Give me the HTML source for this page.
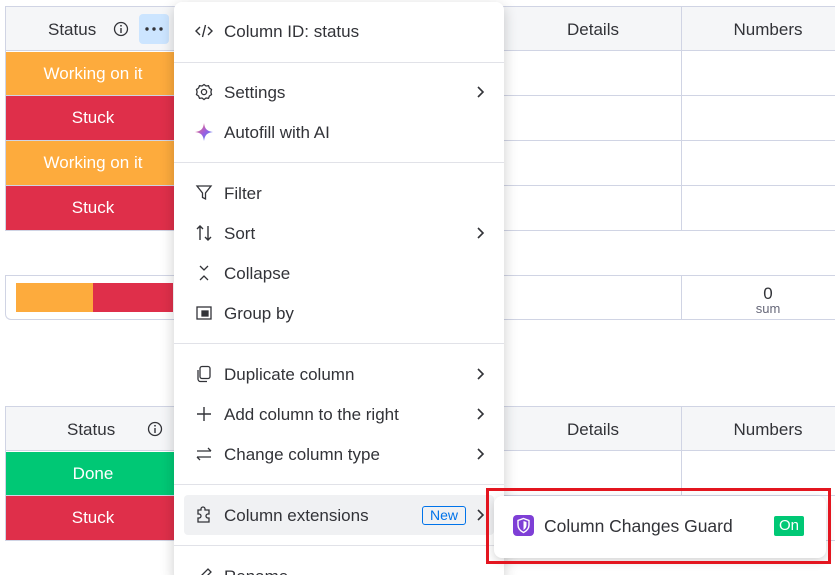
<!DOCTYPE html>
<html><head><style>
html,body{margin:0;width:835px;height:575px;overflow:hidden}
body{background:#fff;font-family:"Liberation Sans",sans-serif;color:#323338;position:relative}
.a{position:absolute}
.hl{position:absolute;height:1px;background:#d0d4e4}
.vl{position:absolute;width:1px;background:#d0d4e4}
.cell{position:absolute;color:#fff;font-size:17px;text-align:center;line-height:44px}
.h{position:absolute;font-size:17px;text-align:center}
.menu{position:absolute;left:174px;top:2px;width:330px;height:580px;background:#fff;border-radius:8px;box-shadow:0 4px 14px rgba(0,0,0,.2)}
.it{position:absolute;left:50px;font-size:17px;line-height:20px}
.ic{position:absolute;left:20px;width:20px;height:20px}
.sep{position:absolute;left:0;width:330px;height:1px;background:#e1e2e8}
.chev{position:absolute;left:300px;width:12px;height:14px}
</style></head><body>
<div class="a" style="left:6px;top:6px;width:829px;height:44px;background:#f5f6f8"></div>
<div class="hl" style="left:6px;top:6px;width:829px"></div>
<div class="hl" style="left:6px;top:50px;width:829px"></div>
<div class="hl" style="left:6px;top:95px;width:829px"></div>
<div class="hl" style="left:6px;top:140px;width:829px"></div>
<div class="hl" style="left:6px;top:185px;width:829px"></div>
<div class="hl" style="left:6px;top:230px;width:829px"></div>
<div class="vl" style="left:5px;top:6px;height:225px"></div>
<div class="vl" style="left:681px;top:6px;height:225px"></div>
<div class="h" style="left:48px;top:20px">Status</div>
<svg class="a" style="left:113px;top:21px" width="16" height="16"><circle cx="8" cy="8" r="6.5" fill="none" stroke="#323338" stroke-width="1.3"/><rect x="7.3" y="7" width="1.4" height="5" fill="#323338"/><circle cx="8" cy="4.8" r=".9" fill="#323338"/></svg>
<div class="a" style="left:139px;top:14px;width:30px;height:30px;background:#cce5ff;border-radius:4px"></div>
<svg class="a" style="left:144px;top:27px" width="20" height="4"><circle cx="3" cy="2" r="1.7" fill="#323338"/><circle cx="10" cy="2" r="1.7" fill="#323338"/><circle cx="17" cy="2" r="1.7" fill="#323338"/></svg>
<div class="cell" style="left:6px;top:52px;width:174px;height:43px;background:#fdab3d">Working on it</div>
<div class="cell" style="left:6px;top:96px;width:174px;background:#df2f4a">Stuck</div>
<div class="cell" style="left:6px;top:141px;width:174px;background:#fdab3d">Working on it</div>
<div class="cell" style="left:6px;top:186px;width:174px;background:#df2f4a">Stuck</div>
<div class="h" style="left:540px;top:20px;width:106px">Details</div>
<div class="h" style="left:715px;top:20px;width:106px">Numbers</div>
<div class="a" style="left:5px;top:275px;width:840px;height:45px;border:1px solid #d0d4e4;border-right:none;border-radius:0 0 0 6px;box-sizing:border-box"></div>
<div class="vl" style="left:681px;top:275px;height:45px"></div>
<div class="a" style="left:16px;top:283px;width:77px;height:29px;background:#fdab3d"></div>
<div class="a" style="left:93px;top:283px;width:80px;height:29px;background:#df2f4a"></div>
<div class="h" style="left:740px;top:285px;width:56px;line-height:17px">0</div>
<div class="h" style="left:740px;top:301px;width:56px;font-size:13px;color:#676879">sum</div>
<div class="a" style="left:6px;top:406px;width:829px;height:44px;background:#f5f6f8"></div>
<div class="hl" style="left:6px;top:406px;width:829px"></div>
<div class="hl" style="left:6px;top:450px;width:829px"></div>
<div class="hl" style="left:6px;top:495px;width:829px"></div>
<div class="hl" style="left:6px;top:540px;width:829px"></div>
<div class="vl" style="left:5px;top:406px;height:135px"></div>
<div class="vl" style="left:681px;top:406px;height:135px"></div>
<div class="h" style="left:67px;top:420px">Status</div>
<svg class="a" style="left:147px;top:421px" width="16" height="16"><circle cx="8" cy="8" r="6.5" fill="none" stroke="#323338" stroke-width="1.3"/><rect x="7.3" y="7" width="1.4" height="5" fill="#323338"/><circle cx="8" cy="4.8" r=".9" fill="#323338"/></svg>
<div class="cell" style="left:6px;top:452px;width:174px;height:43px;background:#00c875">Done</div>
<div class="cell" style="left:6px;top:496px;width:174px;background:#df2f4a">Stuck</div>
<div class="h" style="left:540px;top:420px;width:106px">Details</div>
<div class="h" style="left:715px;top:420px;width:106px">Numbers</div>

<div class="menu">
<svg class="ic" style="top:19px" viewBox="0 0 20 20" fill="none" stroke="#323338" stroke-width="1.4"><path d="M6 6L2 10l4 4M14 6l4 4-4 4M11.5 4l-3 12"/></svg>
<div class="it" style="top:20px">Column ID: status</div>
<div class="sep" style="top:60px"></div>
<svg class="ic" style="top:80px" viewBox="0 0 20 20" fill="none" stroke="#323338" stroke-width="1.3"><path d="M10 2.5l2 1.5 2.5-.3.9 2.3 2.1 1.4-.6 2.6.6 2.6-2.1 1.4-.9 2.3-2.5-.3-2 1.5-2-1.5-2.5.3-.9-2.3-2.1-1.4.6-2.6-.6-2.6 2.1-1.4.9-2.3 2.5.3z"/><circle cx="10" cy="10" r="2.6"/></svg>
<div class="it" style="top:81px">Settings</div>
<svg class="chev" style="top:83px" viewBox="0 0 12 14" fill="none" stroke="#323338" stroke-width="1.6"><path d="M4 2l5 5-5 5"/></svg>
<svg class="ic" style="top:120px" viewBox="0 0 20 20"><defs><linearGradient id="g" x1="0" y1="0" x2="1" y2="1"><stop offset="0" stop-color="#ff7a59"/><stop offset=".5" stop-color="#a25ddc"/><stop offset="1" stop-color="#2f8cff"/></linearGradient></defs><path d="M10 1C10.8 7 13 9.2 19 10 13 10.8 10.8 13 10 19 9.2 13 7 10.8 1 10 7 9.2 9.2 7 10 1z" fill="url(#g)"/></svg>
<div class="it" style="top:121px">Autofill with AI</div>
<div class="sep" style="top:160px"></div>
<svg class="ic" style="top:181px" viewBox="0 0 20 20" fill="none" stroke="#323338" stroke-width="1.3"><path d="M3 3h14l-5.5 7v6l-3-1.5V10z"/></svg>
<div class="it" style="top:182px">Filter</div>
<svg class="ic" style="top:221px" viewBox="0 0 20 20" fill="none" stroke="#323338" stroke-width="1.4"><path d="M6 17V3M3 6l3-3 3 3M14 3v14M11 14l3 3 3-3"/></svg>
<div class="it" style="top:222px">Sort</div>
<svg class="chev" style="top:224px" viewBox="0 0 12 14" fill="none" stroke="#323338" stroke-width="1.6"><path d="M4 2l5 5-5 5"/></svg>
<svg class="ic" style="top:261px" viewBox="0 0 20 20" fill="none" stroke="#323338" stroke-width="1.3"><path d="M6 3l4 4 4-4M6 17l4-4 4 4"/></svg>
<div class="it" style="top:262px">Collapse</div>
<svg class="ic" style="top:301px" viewBox="0 0 20 20" fill="none" stroke="#323338" stroke-width="1.3"><rect x="3" y="4" width="14" height="12"/><rect x="8" y="8" width="6" height="5" fill="#323338"/></svg>
<div class="it" style="top:302px">Group by</div>
<div class="sep" style="top:341px"></div>
<svg class="ic" style="top:362px" viewBox="0 0 20 20" fill="none" stroke="#323338" stroke-width="1.3"><rect x="6" y="2.5" width="10" height="12" rx="2"/><path d="M4 6v9a2.5 2.5 0 002.5 2.5H13"/></svg>
<div class="it" style="top:363px">Duplicate column</div>
<svg class="chev" style="top:365px" viewBox="0 0 12 14" fill="none" stroke="#323338" stroke-width="1.6"><path d="M4 2l5 5-5 5"/></svg>
<svg class="ic" style="top:402px" viewBox="0 0 20 20" fill="none" stroke="#323338" stroke-width="1.4"><path d="M10 3v14M3 10h14"/></svg>
<div class="it" style="top:403px">Add column to the right</div>
<svg class="chev" style="top:405px" viewBox="0 0 12 14" fill="none" stroke="#323338" stroke-width="1.6"><path d="M4 2l5 5-5 5"/></svg>
<svg class="ic" style="top:442px" viewBox="0 0 20 20" fill="none" stroke="#323338" stroke-width="1.3"><path d="M3 7h14M14 4l3 3M17 13H3M6 16l-3-3"/></svg>
<div class="it" style="top:443px">Change column type</div>
<svg class="chev" style="top:445px" viewBox="0 0 12 14" fill="none" stroke="#323338" stroke-width="1.6"><path d="M4 2l5 5-5 5"/></svg>
<div class="sep" style="top:482px"></div>
<div class="a" style="left:10px;top:493px;width:310px;height:40px;background:#f0f1f3;border-radius:4px"></div>
<svg class="ic" style="top:503px" viewBox="0 0 20 20" fill="none" stroke="#323338" stroke-width="1.3"><path d="M7 4a2 2 0 014 0v1h4v4h-1a2 2 0 000 4h1v4H4v-4h1a2 2 0 000-4H4V5h3z"/></svg>
<div class="it" style="top:504px">Column extensions</div>
<div class="a" style="left:248px;top:504px;width:44px;height:19px;border:1px solid #0073ea;border-radius:3px;box-sizing:border-box;color:#0073ea;font-size:14px;text-align:center;line-height:17px">New</div>
<svg class="chev" style="top:506px" viewBox="0 0 12 14" fill="none" stroke="#323338" stroke-width="1.6"><path d="M4 2l5 5-5 5"/></svg>
<div class="sep" style="top:543px"></div>
<svg class="ic" style="top:564px" viewBox="0 0 20 20" fill="none" stroke="#323338" stroke-width="1.3"><path d="M4 16l1-4 9-9 3 3-9 9z"/></svg>
<div class="it" style="top:565px">Rename</div>
</div>

<div class="a" style="left:494px;top:496px;width:332px;height:62px;background:#fff;border-radius:8px;box-shadow:0 3px 10px rgba(0,0,0,.18)"></div>
<div class="a" style="left:486px;top:488px;width:345px;height:76px;border:3px solid #e3151f;box-sizing:border-box"></div>
<svg class="a" style="left:513px;top:515px" width="21" height="21" viewBox="0 0 21 21"><rect width="21" height="21" rx="4" fill="#7e3fd6"/><path d="M10.5 3.5l5.5 2v4.5c0 3.5-2.5 6-5.5 7.5C7.5 16 5 13.5 5 10V5.5z" fill="none" stroke="#fff" stroke-width="1.4"/><path d="M10.5 6l3 1v3c0 2.3-1.4 4-3 5z" fill="#fff"/></svg>
<div class="a" style="left:544px;top:516px;font-size:17.5px">Column Changes Guard</div>
<div class="a" style="left:774px;top:516px;width:30px;height:20px;background:#00c875;color:#fff;font-size:15px;text-align:center;line-height:20px;border-radius:2px">On</div>
</body></html>
